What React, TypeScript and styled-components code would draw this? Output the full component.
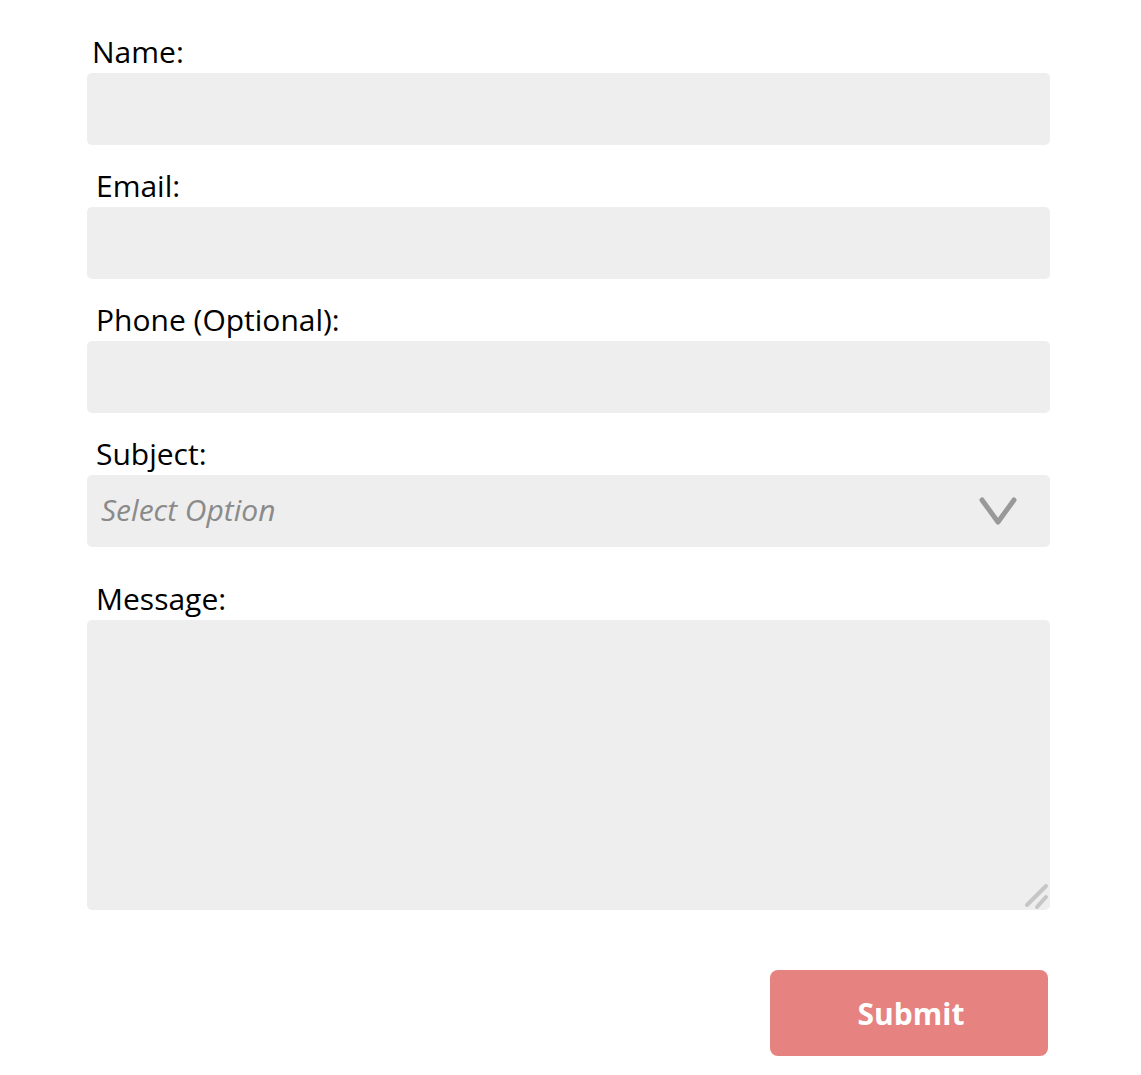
import React from "react";
import styled, { createGlobalStyle } from "styled-components";

const GlobalStyle = createGlobalStyle`
  html, body { margin: 0; padding: 0; background: #ffffff; }
  body { font-family: "Open Sans", "Liberation Sans", sans-serif; color: #000; }
  * { box-sizing: border-box; }
`;

const Form = styled.form`
  width: 963px;
  margin-left: 87px;
  padding-top: 33px;
  display: flex;
  flex-direction: column;
`;

const Field = styled.div<{ $gapAfter?: number }>`
  display: flex;
  flex-direction: column;
  margin-bottom: ${(p) => p.$gapAfter ?? 22}px;
`;

const Label = styled.label<{ $indent?: number }>`
  display: block;
  font-size: 30px;
  line-height: 38px;
  height: 40px;
  padding-left: ${(p) => p.$indent ?? 9}px;
  color: #000;
`;

const Input = styled.input`
  height: 72px;
  width: 100%;
  border: none;
  border-radius: 5px;
  background: #eeeeee;
  font-family: inherit;
  font-size: 30px;
  padding: 0 14px;
  outline: none;
`;

const SelectWrap = styled.div`
  position: relative;
  height: 72px;
`;

const Select = styled.select`
  appearance: none;
  -webkit-appearance: none;
  height: 72px;
  width: 100%;
  border: none;
  border-radius: 5px;
  background: #eeeeee;
  font-family: inherit;
  font-size: 30px;
  font-style: italic;
  color: #8a8a8a;
  padding: 0 14px 3px 14px;
  outline: none;
`;

const Chevron = styled.svg`
  position: absolute;
  right: 32px;
  top: 21px;
  pointer-events: none;
`;

const AreaWrap = styled.div`
  position: relative;
  height: 290px;
`;

const TextArea = styled.textarea`
  height: 290px;
  width: 100%;
  border: none;
  border-radius: 5px;
  background: #eeeeee;
  font-family: inherit;
  font-size: 30px;
  padding: 14px;
  outline: none;
  resize: none;
  display: block;
`;

const ResizeGrip = styled.svg`
  position: absolute;
  right: 0;
  bottom: 0;
  pointer-events: none;
`;

const Actions = styled.div`
  display: flex;
  justify-content: flex-end;
  padding-right: 2px;
  margin-top: 60px;
`;

const Button = styled.button`
  width: 278px;
  height: 86px;
  border: none;
  border-radius: 8px;
  background: #e6827f;
  color: #ffffff;
  font-family: inherit;
  font-weight: 700;
  font-size: 30px;
  padding: 0 0 0 4px;
  cursor: pointer;
`;

export default function App() {
  return (
    <>
      <GlobalStyle />
      <Form onSubmit={(e) => e.preventDefault()}>
        <Field>
          <Label htmlFor="name" $indent={5}>Name:</Label>
          <Input id="name" type="text" />
        </Field>
        <Field>
          <Label htmlFor="email">Email:</Label>
          <Input id="email" type="email" />
        </Field>
        <Field>
          <Label htmlFor="phone">Phone (Optional):</Label>
          <Input id="phone" type="tel" />
        </Field>
        <Field $gapAfter={33}>
          <Label htmlFor="subject">Subject:</Label>
          <SelectWrap>
            <Select id="subject" defaultValue="">
              <option value="" disabled>Select Option</option>
              <option value="general">General</option>
              <option value="support">Support</option>
            </Select>
            <Chevron width="40" height="30" viewBox="0 0 40 30">
              <polyline
                points="4,4 20,26 36,4"
                fill="none"
                stroke="#999999"
                strokeWidth="5"
                strokeLinecap="round"
                strokeLinejoin="round"
              />
            </Chevron>
          </SelectWrap>
        </Field>
        <Field $gapAfter={0}>
          <Label htmlFor="message">Message:</Label>
          <AreaWrap>
            <TextArea id="message" />
            <ResizeGrip width="28" height="28" viewBox="0 0 28 28">
              <line x1="24" y1="4" x2="5" y2="23" stroke="#c6c6c6" strokeWidth="4" strokeLinecap="round" />
              <line x1="24" y1="15" x2="15" y2="25" stroke="#c6c6c6" strokeWidth="4" strokeLinecap="round" />
            </ResizeGrip>
          </AreaWrap>
        </Field>
        <Actions>
          <Button type="submit">Submit</Button>
        </Actions>
      </Form>
    </>
  );
}
